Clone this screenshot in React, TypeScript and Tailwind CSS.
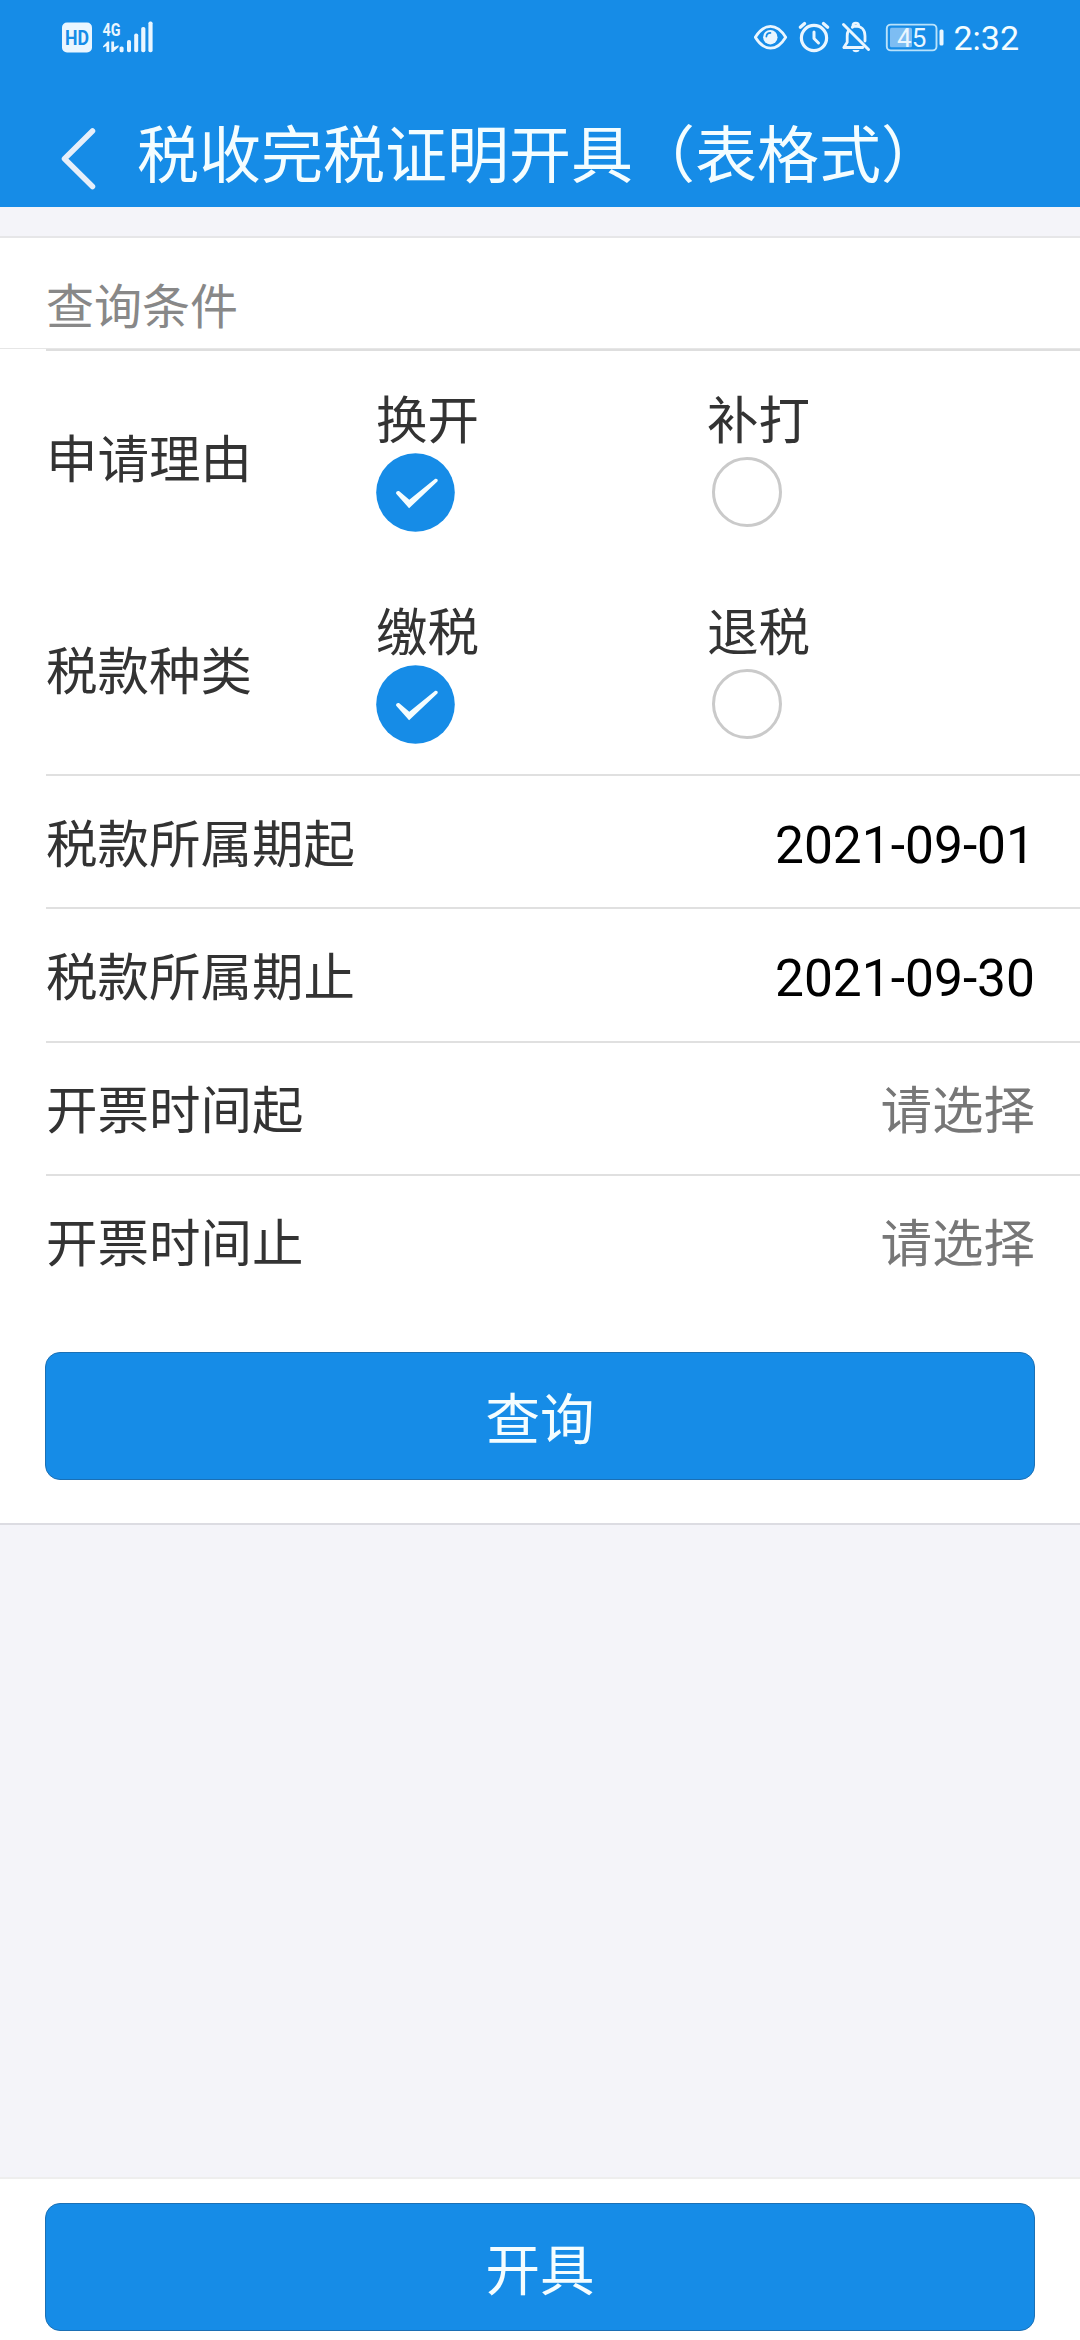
const FONT = "font-['Roboto','Noto_Sans_CJK_SC',sans-serif]";

function SignalIcons() {
  return (
    <svg width="92" height="60" viewBox="62 8 92 60" fill="#eaf6ff">
      <rect x="62" y="22.5" width="30" height="30" rx="5" />
      <text x="77" y="45" textAnchor="middle" fontFamily="Roboto" fontWeight="700" fontSize="20" textLength="24" lengthAdjust="spacingAndGlyphs" fill="#168ce7">HD</text>
      <text x="102.5" y="35.6" fontFamily="Roboto" fontWeight="700" fontSize="18.5" textLength="18" lengthAdjust="spacingAndGlyphs">4G</text>
      <path d="M103 46.2l4.5-4.7h1.7V52h-2.8v-6l-3.4 1.6z" />
      <path d="M111.3 41.5h2.8v5.6l4.5-1.8v1.6L113 52h-1.7z" />
      <rect x="119.6" y="46.5" width="4" height="5.8" rx="1.6" />
      <rect x="127" y="40" width="4" height="12.3" rx="1.8" />
      <rect x="134.2" y="33.5" width="4" height="18.8" rx="1.8" />
      <rect x="141.2" y="27" width="4.2" height="25.3" rx="1.8" />
      <rect x="148.4" y="21.5" width="4.2" height="30.8" rx="1.8" />
    </svg>
  );
}

function StatusIcons() {
  return (
    <svg width="191" height="60" viewBox="754 8 191 60" fill="none" stroke="#eaf6ff" strokeLinecap="round" strokeLinejoin="round">
      <path d="M755.3 37.2c4.2-6.8 9.4-10.9 15.2-10.9s11 4.1 15.2 10.9c-4.2 6.9-9.4 11-15.2 11s-11-4.1-15.2-11z" strokeWidth="2.8" />
      <circle cx="770.3" cy="37.2" r="7.2" fill="#eaf6ff" stroke="none" />
      <path d="M766.4 36.5a4 4 0 0 1 4-3.6" stroke="#168ce7" strokeWidth="1.8" />
      <circle cx="814" cy="38" r="12.6" strokeWidth="3.2" />
      <path d="M814 32v6.5l4.5 4.5" strokeWidth="3" />
      <path d="M800.3 27.3l4.3-3.8M827.7 27.3l-4.3-3.8" strokeWidth="3.2" />
      <path d="M848.5 30.5c-1 1.6-1.3 3.4-1.3 5.5v6.3l-3.4 5.2h19M852.3 27.2c1-.6 2-.9 3.2-1 5.8 0 9.5 3.7 9.5 9.800v5" strokeWidth="2.8" />
      <path d="M853 25.5c0-3.2 5.6-3.2 5.6 0" strokeWidth="2.8" />
      <path d="M843.5 24.5l25 25" strokeWidth="3" />
      <path d="M852.5 50h7c-.6 2.9-6.4 2.9-7 0z" fill="#eaf6ff" stroke="none" />
      <rect x="886.8" y="24.6" width="49.7" height="25.8" rx="4" strokeWidth="1.9" stroke="#b9e2fb" />
      <rect x="890" y="27.7" width="22" height="19.6" rx="1.5" fill="#7dbdf3" stroke="none" />
      <rect x="939.5" y="29.5" width="4" height="16" rx="1.5" fill="#eaf6ff" stroke="none" />
      <text x="911.7" y="46.5" textAnchor="middle" fontFamily="Roboto" fontSize="26" fill="#eaf6ff" stroke="none">45</text>
    </svg>
  );
}

function Option({ label, checked }: { label: string; checked?: boolean }) {
  return (
    <div className="flex w-[331px] flex-col items-start">
      <span className="h-[64px] leading-[66px]">{label}</span>
      {checked ? (
        <svg width="79" height="79" viewBox="0 0 79 79">
          <circle cx="39.5" cy="39.5" r="39.3" fill="#168ce7" />
          <path d="M20.2 40.8c-.8-1.9 1.8-3.7 3.4-2.3l9.7 8.2 25.6-20.6c1.5-1.2 3.8.6 2.5 2.4L33.1 55.2z" fill="#f4fdff" />
        </svg>
      ) : (
        <span className="mt-[4px] ml-[5px] size-[70px] rounded-full border-[3px] border-[#cacaca]" />
      )}
    </div>
  );
}

function ChoiceRow({ label, options }: { label: string; options: string[] }) {
  return (
    <div className="flex h-[212px] items-start pl-[46px]">
      <span className="mt-[72px] w-[330px] leading-[76px]">{label}</span>
      <div className="mt-[38px] flex">
        {options.map((o, i) => (
          <Option key={o} label={o} checked={i === 0} />
        ))}
      </div>
    </div>
  );
}

function FieldRow({ label, value, last }: { label: string; value?: string; last?: boolean }) {
  return (
    <div className={`ml-[46px] flex h-[133.3px] items-center justify-between border-b-2 pt-[7px] pr-[45px] ${last ? "border-transparent" : "border-[#e0e0e0]"}`}>
      <span>{label}</span>
      {value ? <span className="text-black">{value}</span> : <span className="text-[#777]">请选择</span>}
    </div>
  );
}

function PrimaryButton({ children }: { children: string }) {
  return (
    <button className="flex h-[128px] w-full items-center justify-center rounded-[15px] border border-[#1b70b5] bg-[#168ce7] pt-[10px] text-[54.5px] text-[#f4fdff]">
      {children}
    </button>
  );
}

export default function App() {
  return (
    <div className={`flex h-[2340px] w-[1080px] flex-col overflow-hidden bg-[#f4f4f9] text-[51.5px] text-[#333] ${FONT}`}>
      <header className="h-[207px] shrink-0 bg-[#168ce7] text-[#f4fdff]">
        <div className="flex h-[76px] items-center justify-between pr-[61px] pl-[62px]">
          <SignalIcons />
          <div className="flex items-center gap-[8px]">
            <StatusIcons />
            <span className="text-[34px] leading-[76px]">2:32</span>
          </div>
        </div>
        <div className="flex h-[131px] items-start pl-[60px]">
          <svg className="mt-[50px]" width="37" height="65" viewBox="0 0 37 65" fill="none" stroke="#e6effa" strokeWidth="5.5" strokeLinecap="round" strokeLinejoin="round">
            <path d="M32.5 5L4.5 32.8l28 27.7" />
          </svg>
          <h1 className="mt-[35px] ml-[40px] text-[62px] leading-[92px] whitespace-nowrap">税收完税证明开具（表格式）</h1>
        </div>
      </header>

      <main className="mt-[29px] h-[1289px] shrink-0 border-t-2 border-b-2 border-t-[#e6e6e8] border-b-[#dcdce2] bg-white">
        <div className="flex h-[111px] items-center border-b border-[#e6e6e6] text-[48px] text-[#888]">
          <h2 className="ml-[46px] pt-[29px] leading-[70px]">查询条件</h2>
        </div>
        <div className="ml-[46px] h-[2px] bg-[#dedede]" />
        <div className="h-[423px]">
          <ChoiceRow label="申请理由" options={["换开", "补打"]} />
          <ChoiceRow label="税款种类" options={["缴税", "退税"]} />
        </div>
        <div className="ml-[46px] h-[2px] bg-[#e0e0e0]" />
        <FieldRow label="税款所属期起" value="2021-09-01" />
        <FieldRow label="税款所属期止" value="2021-09-30" />
        <FieldRow label="开票时间起" />
        <FieldRow label="开票时间止" last />
        <div className="mt-[42.8px] px-[45px]">
          <PrimaryButton>查询</PrimaryButton>
        </div>
      </main>

      <footer className="mt-auto h-[163px] shrink-0 border-t-2 border-[#eeeeee] bg-white px-[45px] pt-[24px]">
        <PrimaryButton>开具</PrimaryButton>
      </footer>
    </div>
  );
}
